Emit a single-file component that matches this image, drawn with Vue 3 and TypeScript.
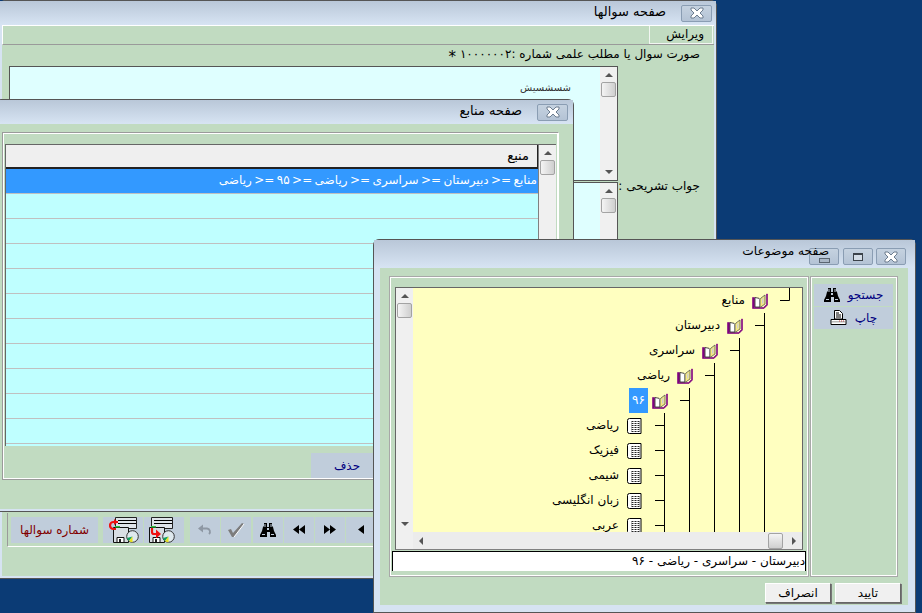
<script setup lang="ts">
const gridRows = Array.from({ length: 10 });

const treeRows = [
  { label: "منابع", indent: 34, icon: "book" },
  { label: "دبیرستان", indent: 59, icon: "book" },
  { label: "سراسری", indent: 84, icon: "book" },
  { label: "ریاضی", indent: 109, icon: "book" },
  { label: "۹۶", indent: 134, icon: "book", selected: true },
  { label: "ریاضی", indent: 160, icon: "leaf" },
  { label: "فیزیک", indent: 160, icon: "leaf" },
  { label: "شیمی", indent: 160, icon: "leaf" },
  { label: "زبان انگلیسی", indent: 160, icon: "leaf" },
  { label: "عربی", indent: 160, icon: "leaf" },
];

// tree lines, in canvas coordinates
const treeLines =
  "M376.5 0V12.5H367 M351.5 25V244 M351.5 37.5H342 M326.5 50V244 M326.5 62.5H317 M301.5 75V244 M301.5 87.5H292 " +
  "M276.5 100V244 M276.5 112.5H267 M251.5 125V244 M251.5 137.5H242 M251.5 162.5H242 M251.5 187.5H242 M251.5 212.5H242 M251.5 237.5H242";
</script>

<template>
  <div class="desktop">
    <svg class="defs" width="0" height="0">
      <defs>
        <symbol id="app" viewBox="0 0 16 16">
          <circle cx="10.5" cy="5.5" r="5" fill="#9cc0cf" />
          <path d="M10.5 .5a5 5 0 0 1 4 2l-4 3z" fill="#e6d64a" />
          <path d="M10.5 5.5l5 0a5 5 0 0 1-2 4z" fill="#4f8f6f" />
          <circle cx="10.5" cy="5.5" r="1.4" fill="#e8f0f4" />
          <path d="M1 10l4-3 5 2 2 1-1 3-4 1-1 2-3-1-1-2-2-1z" fill="#1c2a66" />
          <path d="M5 8l4 1.500-2 2.500-3-1z" fill="#5f78c8" />
          <path d="M9 11h2v2H9z" fill="#c6d2ee" />
        </symbol>
        <symbol id="book" viewBox="0 0 16 16">
          <path d="M.5 4.500h2v10h9l3-3V1h1v11l-3.500 3.500H.5z" fill="#800080" stroke="#800080" stroke-width=".6" />
          <path d="M3 4.500l4 .8 1 1.200v7.500H3z" fill="#fff" stroke="#222" stroke-width=".8" />
          <path d="M8 6.500l1-1.500 4-3v9l-5 3.500z" fill="#f7ec80" stroke="#555" stroke-width=".8" />
          <path d="M10 6l1.500-1.200v5L10 11z" fill="#cfcfcf" />
        </symbol>
        <symbol id="leaf" viewBox="0 0 15 16">
          <path d="M3 .5h11.500v15H3a2 2 0 0 1-2-2v-11a2 2 0 0 1 2-2z" fill="#fff" stroke="#000" />
          <path d="M5 3h8v11H5z" fill="#222" />
          <path d="M5 4h8v1H5zM5 6h8v1H5zM5 8h8v1H5zM5 10h8v1H5zM5 12h8v1H5zM7 3h1v11H7zM10 3h1v11h-1z" fill="#fff" />
        </symbol>
        <symbol id="binoculars" viewBox="0 0 16 16">
          <path d="M4 1h3v4h2V1h3v3l1 1 1 4 2 4v2h-6v-5H7v5H0v-2l2-4 1-4 1-1z" fill="#000" />
          <path d="M4.500 2h1v3h-1zM10.500 2h1v3h-1zM2 12h3v1H2zM11 12h3v1h-3zM7 6h2v2H7z" fill="#c0cddb" />
        </symbol>
        <symbol id="printer" viewBox="0 0 17 16">
          <path d="M4.500.5h5l3 3V9h-8z" fill="#fff" stroke="#000" />
          <path d="M6 3h3M6 5h5M6 7h5" stroke="#000" />
          <path d="M1 9.500h15v5H1z" fill="#fff" stroke="#000" />
          <path d="M2 11h13v1.500H2z" fill="#b8b8b8" />
          <path d="M9 11h5" stroke="#c04040" stroke-dasharray="1 1" />
        </symbol>
        <symbol id="floppy" viewBox="0 0 26 26">
          <path d="M2.500.5h21v11h-21z" fill="#dfe4ea" stroke="#222" />
          <path d="M5 3h18v1H5zM5 6h18v1H5z" fill="#000" />
          <path d="M.5 10.500h15v15H.5z" fill="#d9dee4" stroke="#111" />
          <path d="M4 20.500h7v5H4z" fill="#fff" stroke="#111" />
          <path d="M6 22h2v3H6z" fill="#222" />
          <path d="M2 9h5v1.500H2z" fill="#30c040" />
          <circle cx="19.500" cy="19.500" r="5.800" fill="#dfe9ee" stroke="#333" />
          <path d="M19.500 19.500l-3.500 4.500a5.800 5.800 0 0 1-2-3z" fill="#10a060" />
          <path d="M19.500 19.500v5.800a5.800 5.800 0 0 1-3.500-1.300z" fill="#e8e020" />
        </symbol>
        <symbol id="close-x" viewBox="0 0 18 12">
          <path d="M3 1h3l3 3 3-3h3v2l-3 3 3 3v2h-3L9 8l-3 3H3V9l3-3-3-3z" fill="#fff" stroke="#6d7d8f" />
        </symbol>
      </defs>
    </svg>

    <!-- question window, behind everything -->
    <section class="win win-main">
      <header class="title">
        <svg class="app-ico"><use href="#app" /></svg>
        <span class="title-text main-title">صفحه سوالها</span>
        <button class="cap-btn">
          <svg width="18" height="12"><use href="#close-x" /></svg>
        </button>
      </header>
      <div class="client main-client">
        <div class="menubar"><span class="menu-item fa">ویرایش</span></div>
        <div class="q-label fa">صورت سوال یا مطلب علمی شماره :<span class="digits">۱۰۰۰۰۰۰۲</span> <span class="star">*</span></div>
        <div class="q-row">
          <div class="memo memo-top">
            <div class="memo-body"><span class="memo-text fa">شسشسیش</span></div>
            <div class="vbar">
              <i class="arr up"></i><i class="thumb"></i><span class="grow"></span><i class="arr down"></i>
            </div>
          </div>
        </div>
        <div class="q-row second">
          <div class="memo memo-bottom">
            <div class="memo-body"></div>
            <div class="vbar"><i class="arr up"></i><i class="thumb"></i><span class="grow"></span></div>
          </div>
          <span class="fa side-label">جواب تشریحی :</span>
        </div>
        <div class="toolbar">
          <div class="tool tool-label fa">شماره سوالها</div>
          <div class="tool tool-disk disk-a">
            <svg width="26" height="26"><use href="#floppy" /></svg>
            <svg class="redarrow" width="10" height="12" viewBox="0 0 10 12"><path d="M9 3H4.500a3 3 0 0 0 0 7H7" fill="none" stroke="#f01010" stroke-width="2.200" /><path d="M5 0v6L9 3z" fill="#f01010" /></svg>
          </div>
          <div class="tool tool-disk disk-b">
            <svg width="26" height="26"><use href="#floppy" /></svg>
            <svg class="redarrow low" width="11" height="10" viewBox="0 0 11 10"><path d="M2 0v4a2 2 0 0 0 2 2h3" fill="none" stroke="#f01010" stroke-width="2.200" /><path d="M6 1.500v9L11 6z" fill="#f01010" /></svg>
          </div>
          <span class="tool-sep"></span>
          <div class="tool tool-sq">
            <svg width="16" height="12" viewBox="0 0 16 12"><path d="M1 4.500l5-4v8z" fill="#8e98a4" /><path d="M5 4.500h5a3.200 3.200 0 0 1 2 5.500" fill="none" stroke="#8e98a4" stroke-width="1.800" /></svg>
          </div>
          <div class="tool tool-sq">
            <svg width="18" height="16" viewBox="0 0 18 16"><path d="M1 8l3-1 2 4 9-10 2 1L7 15H5z" fill="#7c7c7c" /><path d="M7 15l10-13" stroke="#fff" /></svg>
          </div>
          <div class="tool tool-sq shifted"><svg width="16" height="16"><use href="#binoculars" /></svg></div>
          <div class="tool tool-sq"><svg width="12" height="9" viewBox="0 0 12 9"><path d="M6 0v9L0 4.500zM12 0v9L6 4.500z" /></svg></div>
          <div class="tool tool-sq"><svg width="12" height="9" viewBox="0 0 12 9"><path d="M0 0v9l6-4.500zM6 0v9l6-4.500z" /></svg></div>
          <div class="tool tool-sq"><svg width="6" height="9" viewBox="0 0 6 9"><path d="M6 0v9L0 4.500z" /></svg></div>
        </div>
      </div>
    </section>

    <!-- sources window -->
    <section class="win win-src">
      <header class="title">
        <svg class="app-ico"><use href="#app" /></svg>
        <span class="title-text main-title">صفحه منابع</span>
        <button class="cap-btn">
          <svg width="18" height="12"><use href="#close-x" /></svg>
        </button>
      </header>
      <div class="client src-client">
        <div class="src-panel">
          <div class="grid">
            <div class="grid-cols">
              <div class="grid-head fa">منبع</div>
              <div class="grid-row selected fa">منابع =&lt; دبیرستان =&lt; سراسری =&lt; ریاضی =&lt; ۹۵ =&lt; ریاضی</div>
              <div v-for="(_, i) in gridRows" :key="i" class="grid-row"></div>
            </div>
            <div class="vbar"><i class="arr up"></i><i class="thumb"></i></div>
          </div>
          <div class="src-foot"><span class="tool del fa">حذف</span></div>
        </div>
      </div>
    </section>

    <!-- subjects window -->
    <section class="win win-sub">
      <header class="title sub-bar">
        <svg class="app-ico"><use href="#app" /></svg>
        <span class="title-text sub-title">صفحه موضوعات</span>
        <div class="caps">
          <button class="cap-btn cap-sm"><i class="glyph-min"></i></button>
          <button class="cap-btn cap-sm"><i class="glyph-max"></i></button>
          <button class="cap-btn cap-sm">
            <svg width="18" height="12"><use href="#close-x" /></svg>
          </button>
        </div>
      </header>
      <div class="client sub-client">
        <div class="sub-panels">
          <div class="tree-panel">
            <div class="tree-box">
              <div class="vbar tree-v">
                <i class="arr up"></i><i class="thumb"></i><span class="grow"></span><i class="arr down"></i>
              </div>
              <div class="tree-canvas">
                <div
                  v-for="(row, i) in treeRows"
                  :key="i"
                  class="tree-row"
                  :style="{ paddingRight: row.indent + 'px' }"
                >
                  <svg class="tree-ico"><use :href="'#' + row.icon" /></svg>
                  <span class="tree-label fa" :class="{ sel: row.selected }">{{ row.label }}</span>
                </div>
                <svg class="tree-lines" width="389" height="244"><path :d="treeLines" stroke="#000" fill="none" /></svg>
              </div>
              <span class="corner"></span>
              <div class="hbar">
                <i class="arr left"></i><span class="grow"></span><i class="thumb hthumb"></i><i class="arr right"></i>
              </div>
            </div>
            <div class="path-input fa">دبیرستان - سراسری - ریاضی - ۹۶</div>
          </div>
          <div class="side-panel">
            <div class="tool side-btn">
              <svg width="16" height="16"><use href="#binoculars" /></svg><span class="fa">جستجو</span>
            </div>
            <div class="tool side-btn">
              <svg width="17" height="16"><use href="#printer" /></svg><span class="fa">چاپ</span>
            </div>
          </div>
        </div>
        <div class="sub-foot">
          <button class="push fa">انصراف</button>
          <button class="push fa">تایید</button>
        </div>
      </div>
    </section>
  </div>
</template>

<style>
html,
body {
  margin: 0;
  background: #0b3b75;
  overflow: hidden;
}
</style>

<style scoped>
.desktop {
  position: relative;
  width: 922px;
  height: 613px;
  overflow: hidden;
  background: #0b3b75;
  font-family: "DejaVu Sans", sans-serif;
  font-size: 12px;
  color: #000;
}
.defs {
  position: absolute;
}
.fa {
  direction: rtl;
  font-family: "DejaVu Sans", sans-serif;
  white-space: nowrap;
}
i {
  display: block;
}

/* windows */
.win {
  position: absolute;
  box-sizing: border-box;
  display: flex;
  flex-direction: column;
  background: #d6e3f2;
  border: 1px solid #555;
  border-radius: 6px 6px 0 0;
}
.win-main {
  left: -1px;
  top: 0;
  width: 718px;
  height: 579px;
  padding: 0 2px 2px;
}
.win-src {
  left: -5px;
  top: 99px;
  width: 579px;
  height: 413px;
  padding-bottom: 2px;
}
.win-sub {
  left: 373px;
  top: 239px;
  width: 543px;
  height: 374px;
  padding: 0 7px 7px 6px;
}
.title {
  flex: none;
  display: flex;
  align-items: center;
  height: 24px;
  background: linear-gradient(#b9c7d8, #d7e4f3);
  margin: 0 -2px;
  padding: 0 4px 0 5px;
}
.win-src .title {
  margin: 0;
  padding: 0 5px 0 2px;
}
.sub-bar {
  height: 28px;
  margin: 0 -7px 0 -6px;
  padding: 0 9px 0 8px;
}
.app-ico {
  width: 16px;
  height: 16px;
  flex: none;
}
.title-text {
  position: relative;
  z-index: 1;
  direction: rtl;
  white-space: nowrap;
  margin-left: auto;
  font-size: 13px;
}
.main-title {
  margin-right: 15px;
  margin-top: -3px;
}
.sub-title {
  margin-right: -20px;
  margin-top: -6px;
  font-size: 12.2px;
}
.cap-btn {
  flex: none;
  box-sizing: border-box;
  display: flex;
  align-items: center;
  justify-content: center;
  padding: 0;
  width: 31px;
  height: 17px;
  border: 1px solid #8a9db3;
  border-radius: 2px;
  background: linear-gradient(#c5d2e0, #b4c3d5);
}
.cap-sm {
  width: 30px;
}
.caps {
  display: flex;
  gap: 3px;
  margin-top: 5px;
}
.caps .cap-sm:first-child {
  margin-right: 1px;
}
.glyph-min {
  box-sizing: border-box;
  width: 11px;
  height: 5px;
  margin-top: 7px;
  background: #aab7c6;
  border: 1px solid #5b6672;
}
.glyph-max {
  box-sizing: border-box;
  width: 10px;
  height: 8px;
  background: #d3dce6;
  border: 1px solid #3b424a;
  border-top-width: 2px;
}

.client {
  flex: 1;
  background: #c1dbc1;
  min-height: 0;
}
.main-client {
  display: flex;
  flex-direction: column;
}

/* question window body */
.menubar {
  flex: none;
  box-sizing: border-box;
  display: flex;
  justify-content: flex-end;
  height: 20px;
  border-top: 1px solid #fff;
  border-left: 1px solid #fff;
  border-bottom: 1px solid #9a9a9a;
}
.menu-item {
  box-sizing: border-box;
  width: 64px;
  padding-right: 8px;
  line-height: 16px;
  text-align: right;
  border: 1px solid #f2f6f2;
  border-top: 0;
  margin-right: 1px;
}
.q-label {
  flex: none;
  height: 21px;
  line-height: 19px;
  padding-right: 14px;
  text-align: right;
}
.digits {
  letter-spacing: 0.6px;
}
.star {
  font-size: 15px;
  line-height: 0;
  vertical-align: -4px;
}
.q-row {
  flex: none;
  margin-left: 7px;
}
.q-row.second {
  display: flex;
  align-items: flex-start;
  margin-top: 1px;
}
.side-label {
  margin-left: auto;
  margin-top: -3px;
  padding-right: 14px;
}
.memo {
  box-sizing: border-box;
  width: 609px;
  display: flex;
  border: 1px solid #555;
  background: #dfffff;
}
.memo-top {
  height: 115px;
}
.memo-bottom {
  height: 320px;
}
.memo-body {
  flex: 1;
  display: flex;
  justify-content: flex-end;
  padding-top: 15px;
  padding-right: 29px;
}
.memo-text {
  font-size: 10px;
  color: #333;
}
.vbar {
  flex: none;
  display: flex;
  flex-direction: column;
  align-items: center;
  width: 17px;
  background: #f0f0f0;
}
.grow {
  flex: 1;
}
.arr {
  width: 0;
  height: 0;
  border: 0 solid transparent;
}
.arr.up {
  margin: 6px 0 5px;
  border-width: 0 4px 4px;
  border-bottom-color: #555;
}
.arr.down {
  margin: 5px 0 6px;
  border-width: 4px 4px 0;
  border-top-color: #555;
}
.arr.left {
  margin: 0 6px;
  border-width: 4px 4px 4px 0;
  border-right-color: #555;
}
.arr.right {
  margin: 0 6px;
  border-width: 4px 0 4px 4px;
  border-left-color: #555;
}
.thumb {
  box-sizing: border-box;
  flex: none;
  width: 15px;
  height: 15px;
  border: 1px solid #a3a3a3;
  border-radius: 2px;
  background: linear-gradient(90deg, #f4f4f4, #cfcfcf);
}

.toolbar {
  flex: none;
  display: flex;
  align-items: center;
  gap: 1px;
  margin: 11px 0 0 5px;
  height: 34px;
  width: 900px;
  padding-left: 3px;
  box-sizing: border-box;
  border-left: 1px solid #9a9a9a;
  border-bottom: 1px solid #fff;
}
.tool {
  background: #c0cddb;
  display: flex;
  align-items: center;
  justify-content: center;
}
.tool-label {
  width: 87px;
  height: 26px;
  margin-right: 4px;
  color: #800000;
}
.tool-disk {
  position: relative;
  box-sizing: border-box;
  width: 40px;
  height: 26px;
  justify-content: flex-start;
}
.disk-a {
  padding-left: 10px;
}
.disk-b {
  padding-left: 5px;
}
.redarrow {
  position: absolute;
  left: 6px;
  top: 2px;
}
.redarrow.low {
  top: 11px;
}
.tool-sep {
  width: 4px;
}
.tool-sq {
  width: 30px;
  height: 26px;
}
.shifted {
  margin-left: 1px;
}

/* sources window body */
.src-client {
  padding-top: 8px;
  padding-right: 14px;
  padding-left: 6px;
}
.src-panel {
  box-sizing: border-box;
  height: 348px;
  padding: 11px 2px 0;
  border: 1px solid #9a9a9a;
  outline: 1px solid #fff;
  outline-offset: -2px;
  border-right-color: #fff;
}
.grid {
  display: flex;
  height: 301px;
  border-top: 1px solid #666;
  border-left: 1px solid #666;
}
.grid-cols {
  flex: 1;
  background: #bfffff;
  border-right: 1px solid #808080;
  overflow: hidden;
}
.grid-head {
  box-sizing: border-box;
  height: 24px;
  line-height: 22px;
  padding-right: 8px;
  background: #efefef;
  border-bottom: 2px solid #222;
  border-right: 1px solid #222;
  text-align: right;
  font-size: 13px;
}
.grid-row {
  box-sizing: border-box;
  height: 25px;
  line-height: 23px;
  text-align: right;
  border-bottom: 1px solid #c0c0c0;
  padding-right: 1px;
}
.grid-row.selected {
  background: #3399ff;
  color: #fff;
  word-spacing: -1.4px;
}
.src-foot {
  padding: 7px 0 0 306px;
}
.del {
  width: 72px;
  height: 25px;
  color: #000080;
}

/* subjects window body */
.sub-client {
  display: flex;
  flex-direction: column;
}
.sub-panels {
  display: flex;
  gap: 1px;
  margin: 8px 0 0 9px;
}
.tree-panel {
  box-sizing: border-box;
  width: 420px;
  height: 301px;
  padding: 10px 5px 0 2px;
  border: 1px solid #a8a8a8;
  outline: 1px solid #fff;
  outline-offset: -2px;
}
.tree-box {
  box-sizing: border-box;
  display: grid;
  grid-template-columns: 17px 1fr;
  grid-template-rows: 244px 17px;
  width: 408px;
  height: 263px;
  margin-left: 3px;
  border: 1px solid #666;
  border-bottom-color: #808080;
}
.tree-canvas {
  position: relative;
  background: #ffffc0;
  overflow: hidden;
}
.tree-v {
  grid-row: 1;
  grid-column: 1;
}
.tree-row {
  display: flex;
  align-items: center;
  flex-direction: row-reverse;
  height: 25px;
  box-sizing: border-box;
}
.tree-ico {
  flex: none;
  width: 16px;
  height: 16px;
}
.tree-label {
  line-height: 25px;
  padding: 0 3px;
  margin-right: 4px;
}
.tree-label.sel {
  background: #3399ff;
  color: #fff;
}
.tree-lines {
  position: absolute;
  left: 0;
  top: 0;
}
.corner {
  background: #f0f0f0;
}
.hbar {
  display: flex;
  align-items: center;
  background: #ececec;
}
.hthumb {
  width: 15px;
  height: 16px;
  margin-right: 3px;
  background: linear-gradient(#f4f4f4, #cfcfcf);
}
.path-input {
  box-sizing: border-box;
  height: 20px;
  width: 414px;
  margin-top: 1px;
  background: #fff;
  border: 1px solid #000;
  border-bottom: 0;
  line-height: 18px;
  text-align: right;
}
.side-panel {
  box-sizing: border-box;
  width: 88px;
  height: 301px;
  padding: 7px 4px 7px 3px;
  border: 1px solid #a8a8a8;
  outline: 1px solid #fff;
  outline-offset: -2px;
}
.side-btn {
  height: 22px;
  margin-bottom: 1px;
  gap: 8px;
  color: #000080;
}
.sub-foot {
  display: flex;
  justify-content: flex-end;
  gap: 4px;
  padding: 6px 7px 0 0;
}
.push {
  box-sizing: border-box;
  width: 66px;
  height: 20px;
  padding: 0;
  font-size: 12px;
  background: #f0f0f0;
  border: 1px solid;
  border-color: #fff #666 #666 #fff;
  box-shadow: 1px 1px 0 #777;
}
</style>
